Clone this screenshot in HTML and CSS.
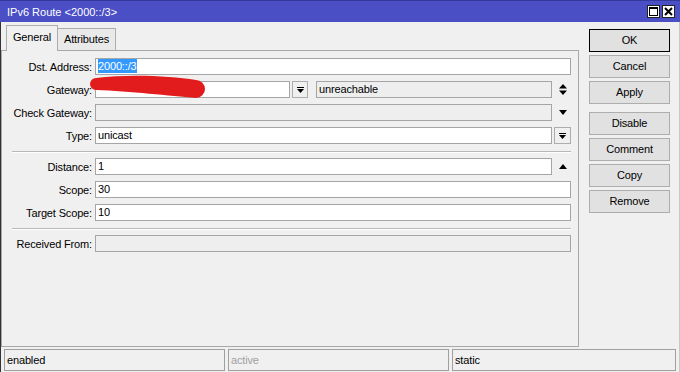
FILE: index.html
```html
<!DOCTYPE html>
<html>
	<head>
		<title>IPv6 Route</title>
		<link rel="stylesheet" href="styles.css">
	</head>
	<body>
		<div class="window">
			<div class="titlebar">
				<span class="title">IPv6 Route &lt;2000::/3&gt;</span>
				<div class="winbtns">
					<span class="winbtn">
						<svg width="9" height="9" viewBox="0 0 9 9"><rect x="0.5" y="0.5" width="8" height="8" fill="none" stroke="#000"/><rect x="0" y="0" width="9" height="2" fill="#000"/></svg>
					</span>
					<span class="winbtn">
						<svg width="9" height="9" viewBox="0 0 9 9"><path d="M1 1 L8 8 M8 1 L1 8" stroke="#000" stroke-width="2"/></svg>
					</span>
				</div>
			</div>
			<div class="frame">
				<div class="main">
					<div class="tabarea">
						<div class="tabs">
							<div class="tab tab-active">General</div>
							<div class="tab tab-attr">Attributes</div>
						</div>
						<div class="panel">
							<div class="form">
								<div class="row">
									<span class="label">Dst. Address:</span>
									<div class="field"><span class="sel">2000::/3</span></div>
								</div>
								<div class="row">
									<span class="label">Gateway:</span>
									<div class="field field-gw"></div>
									<span class="ddbtn">
										<svg width="7" height="6" viewBox="0 0 7 6"><rect x="0" y="0" width="7" height="1" fill="#000"/><path d="M0 2 L7 2 L3.5 6 Z" fill="#000"/></svg>
									</span>
									<div class="field ro field-unreach">unreachable</div>
									<span class="trail">
										<svg width="8" height="11" viewBox="0 0 8 11"><path d="M0 4.5 L8 4.5 L4 0 Z M0 6.5 L8 6.5 L4 11 Z" fill="#000"/></svg>
									</span>
								</div>
								<div class="row">
									<span class="label">Check Gateway:</span>
									<div class="field ro"></div>
									<span class="trail">
										<svg width="8" height="5" viewBox="0 0 8 5"><path d="M0 0 L8 0 L4 5 Z" fill="#000"/></svg>
									</span>
								</div>
								<div class="row">
									<span class="label">Type:</span>
									<div class="field">unicast</div>
									<span class="ddbtn ddbtn-type">
										<svg width="7" height="6" viewBox="0 0 7 6"><rect x="0" y="0" width="7" height="1" fill="#000"/><path d="M0 2 L7 2 L3.5 6 Z" fill="#000"/></svg>
									</span>
								</div>
								<div class="sep"></div>
								<div class="row">
									<span class="label">Distance:</span>
									<div class="field">1</div>
									<span class="trail">
										<svg width="8" height="5" viewBox="0 0 8 5"><path d="M0 5 L8 5 L4 0 Z" fill="#000"/></svg>
									</span>
								</div>
								<div class="row">
									<span class="label">Scope:</span>
									<div class="field">30</div>
								</div>
								<div class="row">
									<span class="label">Target Scope:</span>
									<div class="field">10</div>
								</div>
								<div class="sep"></div>
								<div class="row">
									<span class="label">Received From:</span>
									<div class="field ro"></div>
								</div>
							</div>
						</div>
					</div>
					<div class="buttons">
						<div class="btn btn-default">OK</div>
						<div class="btn">Cancel</div>
						<div class="btn">Apply</div>
						<div class="btn btn-spaced">Disable</div>
						<div class="btn">Comment</div>
						<div class="btn">Copy</div>
						<div class="btn">Remove</div>
					</div>
				</div>
				<div class="statusbar">
					<div class="status">enabled</div>
					<div class="status status-dim">active</div>
					<div class="status status-last">static</div>
				</div>
			</div>
			<svg class="scribble" width="680" height="372" viewBox="0 0 680 372">
				<path d="M96 78 C 130 74, 170 76, 196 80 A 9 9 0 0 1 196 98 C 170 96, 130 91, 96 90 A 6 6 0 0 1 96 78 Z" fill="#e21c1c"/>
			</svg>
		</div>
	</body>
</html>
```

FILE: styles.css
```css
* {box-sizing: border-box;}
body {
	margin: 0;
	background: #f0f0f0;
	font-family: "Liberation Sans", Arial, sans-serif;
	font-size: 11px;
	letter-spacing: -0.15px;
	color: #000;
}
.window {
	position: relative;
	width: 680px;
	height: 372px;
	background: #f0f0f0;
	overflow: hidden;
}
.titlebar {
	height: 22px;
	background: #4a4fc6;
	border-top: 1px solid #34389a;
	display: flex;
	align-items: center;
	justify-content: space-between;
	padding: 0 5px 0 7px;
	color: #fff;
}
.title {letter-spacing: 0;}
.winbtns {display: flex; gap: 2px;}
.winbtn {
	width: 13px;
	height: 13px;
	background: #fff;
	border: 1px solid #222;
	display: flex;
	align-items: center;
	justify-content: center;
}
.frame {
	height: 350px;
	border-left: 1px solid #333;
	border-right: 1px solid #c8c8c8;
}
.main {display: flex; height: 325px;}
.tabarea {
	width: 578px;
	padding-top: 3px;
	display: flex;
	flex-direction: column;
}
.tabs {
	display: flex;
	align-items: flex-end;
	height: 25px;
	padding-left: 5px;
}
.tab {
	height: 22px;
	border: 1px solid #adadad;
	border-bottom: none;
	text-align: center;
	line-height: 21px;
	background: #e9e9e9;
}
.tab-active {
	width: 52px;
	height: 26px;
	margin-bottom: -1px;
	line-height: 23px;
	background: #f0f0f0;
	position: relative;
	z-index: 1;
}
.tab-attr {width: 59px; margin-left: -1px;}
.panel {
	flex: 1;
	border: 1px solid #a8a8a8;
}
.form {
	display: flex;
	flex-direction: column;
	gap: 6px;
	padding: 7px 7px 0 10px;
}
.row {
	display: flex;
	align-items: center;
	height: 17px;
}
.label {
	width: 80px;
	margin-right: 3px;
	text-align: right;
	white-space: nowrap;
}
.field {
	flex: 1;
	height: 17px;
	border: 1px solid #a5a5a5;
	background: #fff;
	padding: 0 2px;
	line-height: 15px;
	white-space: nowrap;
}
.ro {background: #eeeeee;}
.field-gw {flex: none; width: 195px;}
.field-unreach {margin-left: 8px;}
.sel {
	display: inline-block;
	background: #3399ff;
	color: #fff;
	line-height: 14px;
}
.ddbtn {
	width: 16px;
	height: 17px;
	margin-left: 2px;
	border: 1px solid #adadad;
	background: #f0f0f0;
	display: flex;
	align-items: center;
	justify-content: center;
}
.ddbtn-type {width: 17px;}
.trail {
	width: 19px;
	display: flex;
	justify-content: flex-end;
	padding-right: 4px;
}
.sep {
	height: 2px;
	margin: 1px 0 -1px;
	border-top: 1px solid #b8b8b8;
	border-bottom: 1px solid #fff;
}
.buttons {
	width: 81px;
	margin-left: 10px;
	padding-top: 7px;
	display: flex;
	flex-direction: column;
	gap: 3px;
}
.btn {
	height: 23px;
	border: 1px solid #adadad;
	background: #e1e1e1;
	text-align: center;
	line-height: 21px;
}
.btn-default {border-color: #000;}
.btn-spaced {margin-top: 5px;}
.statusbar {
	display: flex;
	gap: 3px;
	padding: 2px 0 0 3px;
}
.status {
	width: 221px;
	height: 22px;
	border: 1px solid #a0a0a0;
	padding-left: 2px;
	line-height: 20px;
}
.status-dim {color: #a0a0a0;}
.status-last {width: 224px;}
.scribble {
	position: absolute;
	left: 0;
	top: 0;
	pointer-events: none;
}
```
